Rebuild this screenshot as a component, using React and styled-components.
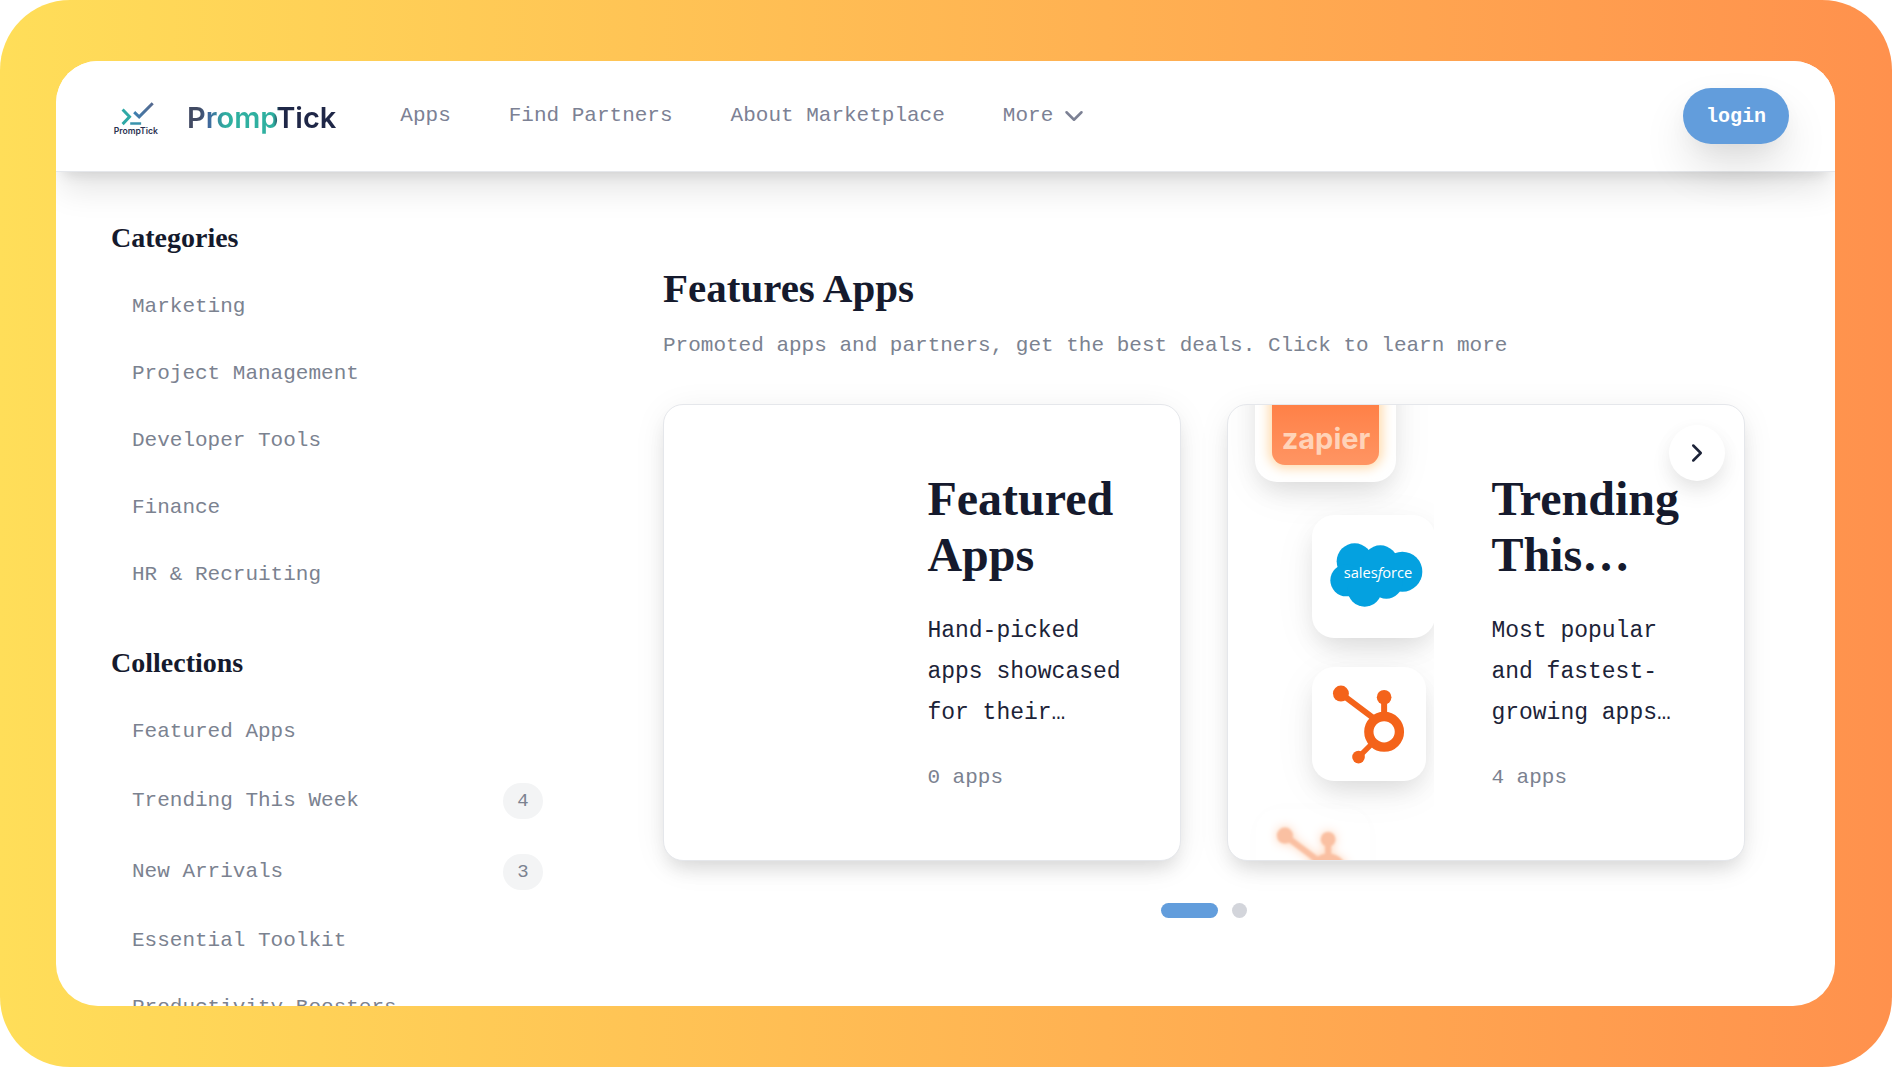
import React from 'react';
import styled, { createGlobalStyle } from 'styled-components';
import { ChevronDown, ChevronRight } from 'lucide-react';

const serif = '"Liberation Serif", serif';
const mono = '"Liberation Mono", monospace';

const GlobalStyle = createGlobalStyle`
  * {
    box-sizing: border-box;
  }

  body {
    margin: 0;
    background: white;
    color: #151a2d;
    font-family: ${mono};
    font-size: 21px;
    line-height: 32px;
  }
`;

const Frame = styled.div`
  height: 100vh;
  padding: 61px 57px 61px 56px;
  border-radius: 70px;
  background: linear-gradient(90deg, #ffde59, #ff914d);
`;

const Panel = styled.div`
  height: 100%;
  overflow: hidden;
  border-radius: 42px;
  background: white;
`;

const Header = styled.header`
  position: relative;
  z-index: 2;
  display: flex;
  align-items: center;
  padding: 27px 46px 27px 57px;
  background: white;
  border-bottom: 1px solid #e5e7eb;
  box-shadow: 0 24px 30px -6px rgba(0, 0, 0, 0.1), 0 10px 12px -7px rgba(0, 0, 0, 0.1);
`;

const Brand = styled.a`
  display: flex;
  align-items: center;
  gap: 27px;
  padding-top: 4px;
  text-decoration: none;
`;

const Wordmark = styled.span`
  font-family: Inter, sans-serif;
  font-size: 29px;
  font-weight: 600;
  background: linear-gradient(90deg, #414a63 8%, #3f6a9e 15%, #2fb0a0 26%, #2fb0a0 58%, #1f2747 62%);
  background-clip: text;
  color: transparent;
`;

const Nav = styled.nav`
  display: flex;
  align-items: center;
  gap: 58px;
  margin-left: 64px;
`;

const NavLink = styled.a`
  color: #7c8194;
  text-decoration: none;
`;

const MoreButton = styled.button`
  display: flex;
  align-items: center;
  gap: 6px;
  padding: 0;
  border: 0;
  background: none;
  color: #7c8194;
  font: inherit;
  cursor: pointer;
`;

const LoginButton = styled.button`
  height: 56px;
  margin-left: auto;
  padding: 0 23px;
  border: 0;
  border-radius: 28px;
  background: #629ddc;
  color: white;
  font-family: ${mono};
  font-size: 20px;
  font-weight: 700;
  box-shadow: 0 24px 48px -4px rgba(0, 0, 0, 0.14), 0 8px 24px -8px rgba(0, 0, 0, 0.08);
  cursor: pointer;
`;

const Content = styled.div`
  display: grid;
  grid-template-columns: 453px 1fr;
  gap: 99px;
  padding: 0 90px 0 55px;
`;

const Sidebar = styled.aside`
  display: flex;
  flex-direction: column;
  gap: 42px;
  padding-top: 50px;
`;

const GroupTitle = styled.h3`
  margin: 0 0 23px;
  font-family: ${serif};
  font-size: 28px;
  line-height: 32px;
`;

const List = styled.ul`
  display: flex;
  flex-direction: column;
  gap: 7px;
  margin: 0;
  padding: 0;
  list-style: none;
`;

const Item = styled.a`
  display: flex;
  align-items: center;
  justify-content: space-between;
  padding: 14px 21px;
  color: #7b8290;
  text-decoration: none;
`;

const Count = styled.span`
  min-width: 40px;
  border-radius: 18px;
  background: #f3f4f5;
  font-size: 19px;
  line-height: 36px;
  text-align: center;
`;

const Main = styled.main`
  padding-top: 92px;
`;

const Title = styled.h2`
  margin: 0 0 18px;
  font-family: ${serif};
  font-size: 41px;
  line-height: 48px;
`;

const Subtitle = styled.p`
  margin: 0 0 42px;
  color: #7b8290;
`;

const Carousel = styled.div`
  position: relative;
  display: grid;
  grid-template-columns: 1fr 1fr;
  gap: 46px;
`;

const Card = styled.article`
  display: flex;
  height: 457px;
  overflow: hidden;
  border: 1px solid #e5e7eb;
  border-radius: 20px;
  background: white;
  box-shadow: 0 12px 18px -4px rgba(0, 0, 0, 0.1), 0 5px 36px -6px rgba(0, 0, 0, 0.1);
`;

const Art = styled.div`
  position: relative;
  flex: 0 0 40%;
  overflow: hidden;
`;

const Tile = styled.div`
  position: absolute;
  left: ${({ $x }) => $x}px;
  top: ${({ $y }) => $y}px;
  width: ${({ $size }) => $size}px;
  height: ${({ $size }) => $size}px;
  display: grid;
  place-items: center;
  border-radius: 22px;
  background: white;
  box-shadow: ${({ $faded }) =>
    $faded ? '0 0 24px rgba(0, 0, 0, 0.04)' : '0 12px 24px -4px rgba(0, 0, 0, 0.1), 0 10px 48px -6px rgba(0, 0, 0, 0.08)'};
  opacity: ${({ $faded }) => ($faded ? 0.4 : 1)};

  svg {
    filter: ${({ $faded }) => ($faded ? 'blur(1px) drop-shadow(0 0 5px #ff8a3c)' : 'none')};
  }
`;

const CardBody = styled.div`
  flex: 1;
  display: flex;
  flex-direction: column;
  justify-content: center;
  gap: 28px;
  padding: 0 56px 0 57px;
`;

const CardTitle = styled.h3`
  margin: 0;
  font-family: ${serif};
  font-size: 48px;
  line-height: 56px;
`;

const CardText = styled.p`
  margin: 0;
  color: #1c2338;
  font-size: 23px;
  line-height: 41px;
`;

const CardMeta = styled.span`
  color: #7b8290;
`;

const NextButton = styled.button`
  position: absolute;
  top: 21px;
  right: 20px;
  display: grid;
  place-items: center;
  width: 56px;
  height: 56px;
  padding: 0;
  border: 0;
  border-radius: 50%;
  background: white;
  color: #1c2338;
  box-shadow: 0 12px 24px -4px rgba(0, 0, 0, 0.1), 0 5px 24px -4px rgba(0, 0, 0, 0.06);
  cursor: pointer;
`;

const Dots = styled.div`
  display: flex;
  justify-content: center;
  gap: 14px;
  margin-top: 42px;
`;

const Dot = styled.button`
  width: ${({ $active }) => ($active ? 57 : 15)}px;
  height: 15px;
  padding: 0;
  border: 0;
  border-radius: 8px;
  background: ${({ $active }) => ($active ? '#629ddc' : '#d3d5db')};
  cursor: pointer;
`;

const LogoMark = () => (
  <svg width="47" height="35" viewBox="68 60 142 104" fill="none" aria-hidden="true">
    <defs>
      <linearGradient id="tick" x1="0" x2="1" y1="0" y2="0">
        <stop offset="0" stopColor="#3d7fb0" />
        <stop offset="1" stopColor="#56698f" />
      </linearGradient>
    </defs>
    <path d="M97 85l21 22-21 22" stroke="#2fa9a6" strokeWidth="9" />
    <path d="M120 127h33" stroke="#3a93ad" strokeWidth="8" />
    <path d="M132 93l15 14 41-41" stroke="url(#tick)" strokeWidth="9" />
    <text x="70" y="158" fontFamily="Inter, sans-serif" fontSize="26" fontWeight="600" fill="#2b3150">
      PrompTick
    </text>
  </svg>
);

const ZapierLogo = () => (
  <svg width="107" height="107" viewBox="0 0 107 107" overflow="visible" aria-hidden="true">
    <defs>
      <linearGradient id="zap" x1="0" x2="0" y1="0" y2="1">
        <stop offset="0.4" stopColor="#ff7f45" />
        <stop offset="1" stopColor="#ff9563" />
      </linearGradient>
      <filter id="glow" x="-30%" y="-30%" width="160%" height="160%">
        <feGaussianBlur stdDeviation="6" />
      </filter>
    </defs>
    <rect x="-3" y="-3" width="113" height="113" rx="16" fill="#ffd9a8" filter="url(#glow)" />
    <rect width="107" height="107" rx="13" fill="url(#zap)" />
    <text
      x="54"
      y="91"
      textAnchor="middle"
      fontFamily="Inter, sans-serif"
      fontSize="29"
      fontWeight="700"
      fill="#ffd3b8"
    >
      zapier
    </text>
  </svg>
);

const SalesforceLogo = () => (
  <svg width="123" height="123" viewBox="277 376 369 369" aria-hidden="true">
    <g fill="#04a1e0">
      <circle cx="405" cy="515" r="54" />
      <circle cx="482" cy="520" r="53" />
      <circle cx="548" cy="546" r="60" />
      <circle cx="380" cy="572" r="48" />
      <circle cx="435" cy="600" r="51" />
      <circle cx="500" cy="579" r="48" />
    </g>
    <text x="372" y="564" fontFamily="Open Sans, sans-serif" fontSize="44" fill="white">
      sales<tspan fontStyle="italic">f</tspan>orce
    </text>
  </svg>
);

const HubspotLogo = () => (
  <svg width="114" height="114" viewBox="277 80 343 343" fill="none" stroke="#f4631a" aria-hidden="true">
    <path d="M364 160l98 74M494 171v56" strokeWidth="18" />
    <path d="M417 351l40-40" strokeWidth="16" />
    <circle cx="494" cy="275" r="46" strokeWidth="28" />
    <g fill="#f4631a" stroke="none">
      <circle cx="364" cy="160" r="24" />
      <circle cx="494" cy="171" r="22" />
      <circle cx="417" cy="351" r="19" />
    </g>
  </svg>
);

const links = ['Apps', 'Find Partners', 'About Marketplace'];

const groups = [
  {
    title: 'Categories',
    items: [
      { name: 'Marketing' },
      { name: 'Project Management' },
      { name: 'Developer Tools' },
      { name: 'Finance' },
      { name: 'HR & Recruiting' },
    ],
  },
  {
    title: 'Collections',
    items: [
      { name: 'Featured Apps' },
      { name: 'Trending This Week', count: 4 },
      { name: 'New Arrivals', count: 3 },
      { name: 'Essential Toolkit' },
      { name: 'Productivity Boosters' },
    ],
  },
];

const App = () => {
  return (
    <>
      <GlobalStyle />
      <Frame>
        <Panel>
          <Header>
            <Brand href="#">
              <LogoMark />
              <Wordmark>PrompTick</Wordmark>
            </Brand>
            <Nav>
              {links.map((link) => (
                <NavLink key={link} href="#">
                  {link}
                </NavLink>
              ))}
              <MoreButton type="button">
                More
                <ChevronDown size={30} strokeWidth={2} />
              </MoreButton>
            </Nav>
            <LoginButton type="button">login</LoginButton>
          </Header>

          <Content>
            <Sidebar>
              {groups.map((group) => (
                <section key={group.title}>
                  <GroupTitle>{group.title}</GroupTitle>
                  <List>
                    {group.items.map((item) => (
                      <li key={item.name}>
                        <Item href="#">
                          {item.name}
                          {item.count && <Count>{item.count}</Count>}
                        </Item>
                      </li>
                    ))}
                  </List>
                </section>
              ))}
            </Sidebar>

            <Main>
              <Title>Features Apps</Title>
              <Subtitle>Promoted apps and partners, get the best deals. Click to learn more</Subtitle>
              <Carousel>
                <Card>
                  <Art />
                  <CardBody>
                    <CardTitle>Featured Apps</CardTitle>
                    <CardText>Hand-picked apps showcased for their…</CardText>
                    <CardMeta>0 apps</CardMeta>
                  </CardBody>
                </Card>
                <Card>
                  <Art>
                    <Tile $x={27} $y={-64} $size={141}>
                      <ZapierLogo />
                    </Tile>
                    <Tile $x={84} $y={110} $size={123}>
                      <SalesforceLogo />
                    </Tile>
                    <Tile $x={84} $y={262} $size={114}>
                      <HubspotLogo />
                    </Tile>
                    <Tile $x={28} $y={404} $size={114} $faded>
                      <HubspotLogo />
                    </Tile>
                  </Art>
                  <CardBody>
                    <CardTitle>Trending This…</CardTitle>
                    <CardText>Most popular and fastest-growing apps…</CardText>
                    <CardMeta>4 apps</CardMeta>
                  </CardBody>
                </Card>
                <NextButton type="button" aria-label="Next">
                  <ChevronRight size={30} />
                </NextButton>
              </Carousel>
              <Dots>
                <Dot type="button" aria-label="Slide 1" $active />
                <Dot type="button" aria-label="Slide 2" />
              </Dots>
            </Main>
          </Content>
        </Panel>
      </Frame>
    </>
  );
};

export default App;
